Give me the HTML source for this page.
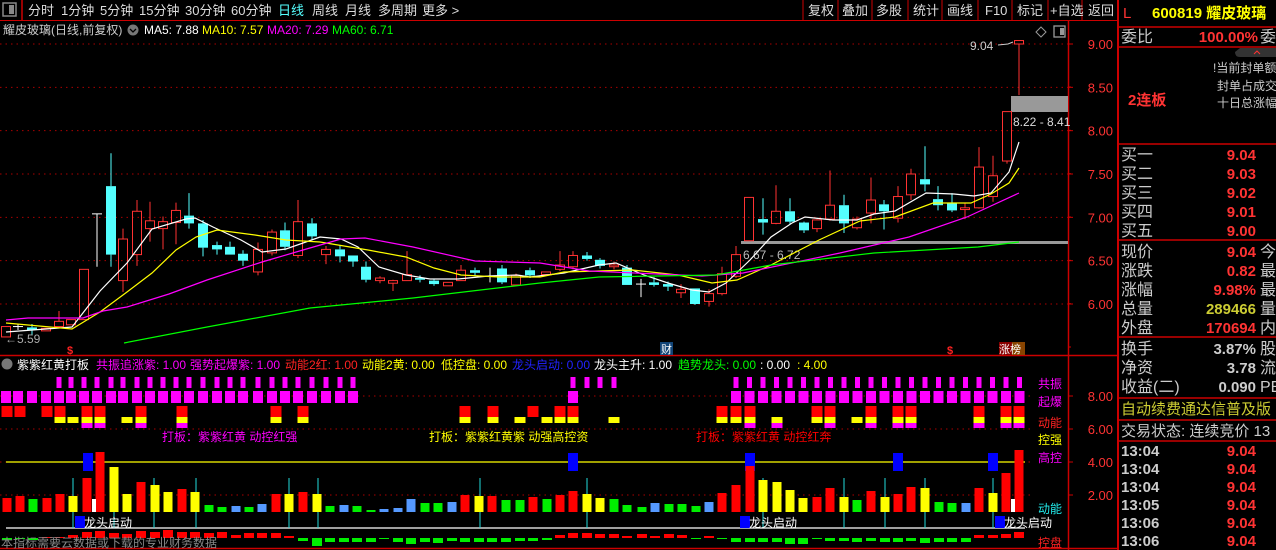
<!DOCTYPE html>
<html><head><meta charset="utf-8">
<style>
html,body{margin:0;padding:0;background:#000;width:1276px;height:550px;overflow:hidden}
svg{display:block}
text{font-family:"Liberation Sans","Noto Sans CJK SC",sans-serif}
</style></head>
<body>
<svg id="s" width="1276" height="550" xmlns="http://www.w3.org/2000/svg">
<rect width="1276" height="550" fill="#000"/>
<rect x="3" y="3" width="13" height="13" fill="none" stroke="#888" stroke-width="1.5"/>
<rect x="9" y="5" width="5" height="9" fill="#888"/>
<line x1="22" y1="0" x2="22" y2="20" stroke="#c00" stroke-width="1.5"/>
<line x1="0" y1="20.5" x2="1117" y2="20.5" stroke="#c00"/>
<g font-size="13" fill="#ddd">
<text x="28" y="15">分时</text><text x="61" y="15">1分钟</text><text x="100" y="15">5分钟</text><text x="139" y="15">15分钟</text><text x="185" y="15">30分钟</text><text x="231" y="15">60分钟</text><text x="278" y="15" fill="#5ff">日线</text><text x="312" y="15">周线</text><text x="345" y="15">月线</text><text x="378" y="15">多周期</text><text x="422" y="15">更多 &gt;</text>
</g>
<g stroke="#c00" stroke-width="1"><line x1="803" y1="0" x2="803" y2="20"/><line x1="838" y1="0" x2="838" y2="20"/><line x1="872" y1="0" x2="872" y2="20"/><line x1="908" y1="0" x2="908" y2="20"/><line x1="942" y1="0" x2="942" y2="20"/><line x1="978" y1="0" x2="978" y2="20"/><line x1="1012" y1="0" x2="1012" y2="20"/><line x1="1048" y1="0" x2="1048" y2="20"/><line x1="1082" y1="0" x2="1082" y2="20"/></g>
<g font-size="13" fill="#ddd">
<text x="808" y="15">复权</text><text x="842" y="15">叠加</text><text x="876" y="15">多股</text><text x="913" y="15">统计</text><text x="947" y="15">画线</text><text x="985" y="15">F10</text><text x="1017" y="15">标记</text><text x="1050" y="15">+自选</text><text x="1088" y="15">返回</text>
</g>
<g font-size="12">
<text x="3" y="34" fill="#ccc">耀皮玻璃(日线,前复权)</text>
<circle cx="133" cy="30" r="5.5" fill="#777"/><path d="M130 29 L133 32 L136 29" stroke="#000" fill="none" stroke-width="1.3"/>
<text x="144" y="34" fill="#fff">MA5: 7.88</text><text x="202" y="34" fill="#ff0">MA10: 7.57</text><text x="267" y="34" fill="#f0f">MA20: 7.29</text><text x="332" y="34" fill="#0f0">MA60: 6.71</text>
</g>
<path d="M1041 27 L1046 32 L1041 37 L1036 32 Z" fill="none" stroke="#999"/>
<rect x="1054" y="26" width="11" height="11" fill="none" stroke="#999" stroke-width="1.3"/><rect x="1060" y="28" width="4" height="7" fill="#999"/>
<line x1="1068.5" y1="21" x2="1068.5" y2="550" stroke="#c00" stroke-width="1.5"/>
<line x1="1118" y1="0" x2="1118" y2="550" stroke="#c00" stroke-width="2"/>
<line x1="0" y1="355.5" x2="1117" y2="355.5" stroke="#c00" stroke-width="1.5"/>
<line x1="0" y1="548.5" x2="1117" y2="548.5" stroke="#c00" stroke-width="1.5"/>
<g id="chart"></g>
<g id="ind"></g>
<g font-size="15">
<text x="1123" y="18" fill="#f33">L</text>
<text x="1152" y="18" fill="#ff0" font-weight="bold">600819 耀皮玻璃</text>
<line x1="1119" y1="27" x2="1276" y2="27" stroke="#c00" stroke-width="1.5"/>
<text x="1121" y="42" fill="#ccc" font-size="16">委比</text><text x="1258" y="42" fill="#f33" text-anchor="end" font-weight="bold">100.00%</text><text x="1260" y="42" fill="#ccc" font-size="16">委</text>
<line x1="1119" y1="47" x2="1276" y2="47" stroke="#c00" stroke-width="1.5"/>
<path d="M1240 48 H1276 V57 H1240 Q1235 57 1235 52 Z" fill="#333"/><path d="M1254 54 L1257 51 L1260 54" stroke="#f33" fill="none"/>
<text x="1128" y="105" fill="#f33" font-size="15" font-weight="bold">2连板</text>
<g font-size="12" fill="#ccc"><text x="1213" y="72">ǃ当前封单额</text><text x="1217" y="90">封单占成交</text><text x="1217" y="107">十日总涨幅</text></g>
<line x1="1119" y1="144" x2="1276" y2="144" stroke="#c00" stroke-width="1.5"/>
<g fill="#ccc" font-size="16"><text x="1121" y="160">买一</text><text x="1121" y="179">买二</text><text x="1121" y="198">买三</text><text x="1121" y="217">买四</text><text x="1121" y="236">买五</text></g>
<g fill="#f33" font-weight="bold" text-anchor="end"><text x="1256" y="160">9.04</text><text x="1256" y="179">9.03</text><text x="1256" y="198">9.02</text><text x="1256" y="217">9.01</text><text x="1256" y="236">9.00</text></g>
<line x1="1119" y1="240" x2="1276" y2="240" stroke="#c00" stroke-width="1.5"/>
<g fill="#ccc" font-size="16"><text x="1121" y="257">现价</text><text x="1121" y="276">涨跌</text><text x="1121" y="295">涨幅</text><text x="1121" y="314">总量</text><text x="1121" y="333">外盘</text>
<text x="1260" y="257">今</text><text x="1260" y="276">最</text><text x="1260" y="295">最</text><text x="1260" y="314">量</text><text x="1260" y="333">内</text></g>
<g font-weight="bold" text-anchor="end"><text x="1256" y="257" fill="#f33">9.04</text><text x="1256" y="276" fill="#f33">0.82</text><text x="1256" y="295" fill="#f33">9.98%</text><text x="1256" y="314" fill="#cc3">289466</text><text x="1256" y="333" fill="#f33">170694</text></g>
<line x1="1119" y1="337" x2="1276" y2="337" stroke="#c00" stroke-width="1.5"/>
<g fill="#ccc" font-size="16"><text x="1121" y="354">换手</text><text x="1121" y="373">净资</text><text x="1121" y="392">收益(二)</text><text x="1260" y="354">股</text><text x="1260" y="373">流</text><text x="1260" y="392">PE</text></g>
<g font-weight="bold" text-anchor="end" fill="#ccc"><text x="1256" y="354">3.87%</text><text x="1256" y="373">3.78</text><text x="1256" y="392">0.090</text></g>
<line x1="1119" y1="398" x2="1276" y2="398" stroke="#c00" stroke-width="1.5"/>
<text x="1121" y="414" fill="#cc3" font-size="15">自动续费通达信普及版</text>
<line x1="1119" y1="420" x2="1276" y2="420" stroke="#c00" stroke-width="1.5"/>
<text x="1121" y="436" fill="#ccc" font-size="15">交易状态: 连续竞价 13</text>
<line x1="1119" y1="441" x2="1276" y2="441" stroke="#c00" stroke-width="1.5"/>
<g font-weight="bold" font-size="15"><g fill="#ccc"><text x="1121" y="456">13:04</text><text x="1121" y="474">13:04</text><text x="1121" y="492">13:04</text><text x="1121" y="510">13:05</text><text x="1121" y="528">13:06</text><text x="1121" y="546">13:06</text></g>
<g fill="#f33" text-anchor="end"><text x="1256" y="456">9.04</text><text x="1256" y="474">9.04</text><text x="1256" y="492">9.04</text><text x="1256" y="510">9.04</text><text x="1256" y="528">9.04</text><text x="1256" y="546">9.04</text></g></g>
</g>
</svg>
<script>
var NS="http://www.w3.org/2000/svg";
function el(p,t,a,txt){var e=document.createElementNS(NS,t);for(var k in a)e.setAttribute(k,a[k]);if(txt!=null)e.textContent=txt;p.appendChild(e);return e;}
var C=document.getElementById('chart'),I=document.getElementById('ind');
function Y(p){return 44+(9-p)*86.67;}
[9,8.5,8,7.5,7,6.5,6].forEach(function(p){el(C,'line',{x1:0,x2:1068,y1:Y(p),y2:Y(p),stroke:'#a00','stroke-dasharray':'1.5 4'});
el(C,'text',{x:1113,y:Y(p)+5,fill:'#f33','font-size':'13','text-anchor':'end'},p.toFixed(2));
el(C,'line',{x1:1068,x2:1073,y1:Y(p),y2:Y(p),stroke:'#c00'});
el(C,'line',{x1:1068,x2:1071,y1:Y(p)+43,y2:Y(p)+43,stroke:'#c00'});});
var K=[[6,5.62,5.74],[18,5.74,5.74,5.77,5.70],[32,5.73,5.70,5.77,5.64],[46,5.69,5.72],[59,5.74,5.80,5.92,5.72],[71,5.76,5.82],[84,5.82,6.40],[97,7.04,7.04,7.04,6.43],[111,7.36,6.57,7.74,6.43],[123,6.27,6.75,6.87,6.14],[137,6.57,7.07,7.2,6.44],[150,6.87,6.96,7.18,6.72],[163,6.87,6.95,7.01,6.63],[176,6.94,7.08,7.17,6.69],[189,7.02,6.93,7.28,6.87],[203,6.93,6.65,6.97,6.55],[217,6.68,6.63,6.72,6.57],[230,6.66,6.57,6.72,6.57],[243,6.58,6.50,6.62,6.44],[258,6.37,6.63,6.71,6.33],[272,6.59,6.83,6.86,6.56],[285,6.85,6.66,6.94,6.62],[298,6.56,6.95,7.2,6.53],[312,6.93,6.78,6.99,6.74],[326,6.57,6.63,6.67,6.46],[340,6.63,6.55,6.68,6.48],[353,6.56,6.49,6.56,6.43],[366,6.43,6.28,6.49,6.25],[380,6.27,6.30,6.32,6.24],[393,6.24,6.27,6.28,6.15],[407,6.27,6.34,6.61,6.27],[420,6.30,6.28,6.33,6.25],[434,6.27,6.23,6.29,6.21],[448,6.21,6.25],[461,6.27,6.39,6.45,6.27],[475,6.39,6.36,6.42,6.32],[490,6.32,6.32,6.42,6.25],[502,6.41,6.25,6.45,6.23],[516,6.22,6.33,6.35,6.22],[530,6.39,6.33,6.42,6.30],[546,6.34,6.37],[560,6.40,6.45,6.61,6.38],[573,6.43,6.56,6.61,6.40],[587,6.56,6.52,6.60,6.50],[600,6.51,6.44,6.53,6.41],[614,6.43,6.45,6.49,6.40],[627,6.42,6.22,6.45,6.22],[641,6.23,6.23,6.29,6.08],[654,6.25,6.22,6.31,6.20],[668,6.23,6.20,6.26,6.15],[681,6.13,6.17,6.23,6.07],[695,6.18,6.00,6.18,5.99],[709,6.03,6.12,6.17,5.97],[722,6.12,6.35,6.43,6.10],[736,6.32,6.57,6.67,6.30],[749,6.73,7.23],[763,6.98,6.94,7.22,6.80],[776,6.93,7.07,7.37,6.92],[790,7.07,6.95,7.22,6.92],[804,6.94,6.85,6.95,6.82],[817,6.87,6.97,6.98,6.83],[830,6.98,7.14,7.54,6.96],[844,7.14,6.93,7.26,6.82],[857,6.88,6.98,7.01,6.86],[871,7.05,7.20,7.46,6.93],[884,7.15,7.07,7.20,6.86],[898,6.99,7.24,7.36,6.94],[911,7.26,7.50,7.56,7.20],[925,7.44,7.38,7.82,7.30],[938,7.21,7.14,7.36,7.08],[952,7.17,7.08,7.28,7.06],[965,7.09,7.11,7.17,6.98],[979,7.11,7.58,7.81,7.10],[993,7.24,7.48,7.71,7.18],[1007,7.65,8.22,8.22,7.62],[1019,9.00,9.04,9.04,8.41]];
el(C,'rect',{x:741,y:241,width:327,height:3,fill:'#999'});
el(C,'text',{x:743,y:259,fill:'#bbb','font-size':'12'},'6.67 - 6.72');
el(C,'rect',{x:1011,y:96,width:57,height:16,fill:'#999'});
el(C,'text',{x:1013,y:126,fill:'#ddd','font-size':'12'},'8.22 - 8.41');
el(C,'text',{x:970,y:50,fill:'#ccc','font-size':'12'},'9.04');
el(C,'path',{d:'M998 45 L1008 44 L1013 42',stroke:'#ccc',fill:'none'});
K.forEach(function(k){var x=k[0],o=k[1],c=k[2],h=k[3]!=null?k[3]:Math.max(o,c),l=k[4]!=null?k[4]:Math.min(o,c);
var up=c>o,dj=Math.abs(c-o)<0.005,col=dj?'#fff':(up?'#ff3232':'#54ffff');
var t=Y(Math.max(o,c)),b=Y(Math.min(o,c));
el(C,'line',{x1:x,x2:x,y1:Y(h),y2:t,stroke:col});el(C,'line',{x1:x,x2:x,y1:b,y2:Y(l),stroke:col});
if(dj){el(C,'line',{x1:x-5,x2:x+5,y1:t,y2:t,stroke:col});}
else if(up){el(C,'rect',{x:x-4.5,y:t,width:9,height:Math.max(b-t,1),fill:'none',stroke:col});}
else el(C,'rect',{x:x-5,y:t,width:10,height:Math.max(b-t,1.5),fill:col});});
function pl(pts,col){el(C,'polyline',{points:pts,fill:'none',stroke:col,'stroke-width':1.2});}
pl('6,332 72,327 100,291 127,263 152,229 186,219 195,218 213,227 241,240 262,252 286,249 320,237 341,239 358,247 379,267 406,275 430,279 458,279 489,276 517,275 530,277 564,273 599,265 616,263 644,275 668,283 692,290 709,292 726,283 750,260 771,237 792,223 805,217 833,220 857,220 874,214 895,211 926,193 954,194 974,196 991,193 1009,172 1019,142','#fff');
pl('6,323 72,329 100,312 127,292 152,273 176,250 196,237 217,230 255,235 286,240 320,242 368,250 406,257 434,268 461,275 499,277 540,277 564,272 633,270 678,275 712,283 737,280 771,265 819,240 860,221 895,217 933,203 971,203 991,194 1009,183 1019,168','#ff0');
pl('6,320 28,318 83,318 103,311 127,307 169,294 207,280 262,262 303,250 341,239 365,238 413,247 475,261 540,263 589,271 702,276 743,273 840,253 909,237 967,217 1019,193','#f0f');
pl('124,343 207,327 310,308 413,298 540,283 599,277 716,275 771,265 874,253 978,247 1019,242','#0f0');
el(C,'text',{x:5,y:343,fill:'#aaa','font-size':'12'},'←5.59');
el(C,'text',{x:67,y:354,fill:'#f22','font-size':'11','font-weight':'bold'},'$');
el(C,'text',{x:947,y:354,fill:'#f22','font-size':'11','font-weight':'bold'},'$');
el(C,'rect',{x:660,y:342,width:13,height:13,fill:'#147'});el(C,'text',{x:661,y:353,fill:'#fff','font-size':'11'},'财');
el(C,'rect',{x:999,y:342,width:13,height:13,fill:'#800'});el(C,'rect',{x:1012,y:342,width:13,height:13,fill:'#840'});
el(C,'text',{x:999,y:353,fill:'#fff','font-size':'11'},'涨榜');
el(I,'circle',{cx:7,cy:364,r:5.5,fill:'#777'});
var hd=[[17,'#fff','紫紫红黄打板'],[96,'#f0f','共振追涨紫: 1.00'],[190,'#f0f','强势起爆紫: 1.00'],[285,'#f22','动能2红: 1.00'],[362,'#ff0','动能2黄: 0.00'],[441,'#ff0','低控盘: 0.00'],[512,'#22f','龙头启动: 0.00'],[594,'#fff','龙头主升: 1.00'],[678,'#0f0','趋势龙头: 0.00'],[760,'#fff',': 0.00'],[797,'#ff0',': 4.00']];
hd.forEach(function(h){el(I,'text',{x:h[0],y:369,fill:h[1],'font-size':'12'},h[2]);});
[8,6,4,2].forEach(function(v){var y=396+(8-v)*16.5;el(I,'line',{x1:0,x2:1030,y1:y,y2:y,stroke:'#a00','stroke-dasharray':'1.5 4'});
el(I,'text',{x:1113,y:y+5,fill:'#f33','font-size':'13','text-anchor':'end'},v.toFixed(2));el(I,'line',{x1:1068,x2:1073,y1:y,y2:y,stroke:'#c00'});});
var xs=[6,18,32,46,59,71,84,97,111,123,137,150,163,176,189,203,217,230,243,258,272,285,298,312,326,340,353];
xs.forEach(function(x,i){el(I,'rect',{x:x-5,y:391,width:10,height:12,fill:'#f0f'});if(i>=4)el(I,'rect',{x:x-2.5,y:377,width:5,height:11,fill:'#f0f'});});
[573].forEach(function(x){el(I,'rect',{x:x-5,y:391,width:10,height:12,fill:'#f0f'});});
[573,587,600,614].forEach(function(x){el(I,'rect',{x:x-2.5,y:377,width:5,height:11,fill:'#f0f'});});
for(var x=736;x<=1020;x+=13.5){el(I,'rect',{x:x-5,y:391,width:10,height:12,fill:'#f0f'});el(I,'rect',{x:x-2.5,y:377,width:5,height:11,fill:'#f0f'});}
function blk(list,y,h,col){list.forEach(function(x){el(I,'rect',{x:x-5.5,y:y,width:11,height:h,fill:col});});}
blk([7,20,47,60,87,100,141,182,276,303,465,493,533,560,573,722,736,750,817,830,871,898,911,979,1006,1019],406,11,'#f00');
blk([60,73,87,100,127,141,182,276,303,465,493,520,547,560,573,614,722,736,750,777,817,830,857,871,898,911,979,1006,1019],417,6,'#ff0');
blk([87,100,141,182,750,777,830,871,898,911,979,1006,1019],423,5,'#f0f');
el(I,'text',{x:162,y:441,fill:'#f0f','font-size':'12'},'打板：紫紫红黄 动控红强');
el(I,'text',{x:429,y:441,fill:'#ff0','font-size':'12'},'打板：紫紫红黄紫 动强高控资');
el(I,'text',{x:696,y:441,fill:'#f00','font-size':'12'},'打板：紫紫红黄 动控红奔');
el(I,'line',{x1:6,x2:1025,y1:462,y2:462,stroke:'#ff0','stroke-width':1.3});
el(I,'line',{x1:6,x2:1025,y1:528,y2:528,stroke:'#fff','stroke-width':1.3});
[88,573,750,898,993].forEach(function(x){el(I,'rect',{x:x-5,y:453,width:10,height:18,fill:'#00f'});});
[73,114,154,196,289,318,480,587,763,844,885,925,993].forEach(function(x){el(I,'line',{x1:x,x2:x,y1:478,y2:528,stroke:'#2dd'});});
var CO={r:'#f00',y:'#ff0',g:'#0e0',b:'#59f'};
var V=[[7,498,'r'],[20,496,'r'],[33,499,'g'],[47,498,'r'],[60,494,'r'],[73,496,'y'],[87,478,'r'],[100,452,'r'],[114,467,'y'],[127,494,'y'],[141,482,'r'],[155,485,'y'],[168,492,'y'],[182,489,'r'],[195,492,'y'],[209,505,'g'],[222,507,'g'],[236,506,'b'],[249,507,'g'],[262,504,'b'],[276,494,'r'],[289,494,'y'],[303,492,'r'],[317,494,'y'],[330,506,'g'],[344,505,'b'],[357,506,'g'],[371,510,'g'],[384,509,'b'],[398,508,'b'],[411,499,'b'],[425,503,'g'],[438,503,'g'],[452,502,'b'],[465,495,'r'],[479,496,'y'],[492,496,'r'],[506,500,'g'],[520,500,'g'],[533,497,'r'],[547,499,'g'],[560,495,'r'],[573,491,'r'],[587,494,'y'],[600,498,'y'],[614,499,'g'],[627,505,'g'],[642,507,'g'],[655,503,'b'],[669,504,'g'],[682,504,'g'],[696,506,'g'],[709,502,'b'],[722,493,'r'],[736,485,'r'],[750,466,'r'],[763,480,'y'],[777,482,'y'],[790,490,'y'],[803,498,'y'],[817,497,'r'],[830,488,'r'],[844,497,'y'],[857,500,'g'],[871,491,'r'],[885,497,'y'],[898,494,'r'],[911,487,'r'],[925,488,'y'],[939,502,'g'],[952,503,'g'],[966,503,'b'],[979,488,'r'],[993,493,'y'],[1006,473,'r'],[1019,450,'r']];
V.forEach(function(v){el(I,'rect',{x:v[0]-4.5,y:v[1],width:9,height:512-v[1],fill:CO[v[2]]});});
el(I,'rect',{x:92,y:499,width:4,height:13,fill:'#fff'});el(I,'rect',{x:1011,y:499,width:4,height:13,fill:'#fff'});
var B=[[7,-2],[20,-1],[33,-2],[47,1],[60,1],[73,3],[87,6],[100,7],[114,5],[127,4],[141,7],[155,6],[168,8],[182,6],[195,6],[209,5],[222,6],[236,3],[249,5],[262,5],[276,5],[289,2],[303,-3],[317,-8],[330,-4],[344,-4],[357,-4],[371,-4],[384,-1],[398,-4],[411,-6],[425,-4],[438,-5],[452,-3],[465,-4],[479,-4],[492,-4],[506,-4],[520,-3],[533,-3],[547,-2],[560,3],[573,5],[587,5],[600,4],[614,4],[627,2],[642,4],[655,2],[669,4],[682,3],[696,-1],[709,2],[722,-1],[736,-4],[750,-4],[763,-4],[777,-4],[790,-6],[803,-6],[817,-1],[830,-3],[844,-3],[857,-4],[871,-3],[885,-4],[898,-4],[911,-3],[925,-5],[939,-4],[952,-4],[966,-4],[979,3],[993,3],[1006,4],[1019,6]];
B.forEach(function(b){var h=Math.abs(b[1]);if(b[1]>0)el(I,'rect',{x:b[0]-5,y:538-h,width:10,height:h,fill:'#f00'});else el(I,'rect',{x:b[0]-5,y:538,width:10,height:h,fill:'#0e0'});});
el(I,'text',{x:1,y:547,fill:'#888','font-size':'12'},'本指标需要云数据或下载的专业财务数据');
[[75,'龙头启动'],[740,'龙头启动'],[995,'龙头启动']].forEach(function(d){el(I,'rect',{x:d[0],y:516,width:10,height:12,fill:'#00f'});el(I,'text',{x:d[0]+9,y:527,fill:'#fff','font-size':'12'},d[1]);});
var RL=[[383,'#f0f','共振'],[401,'#f0f','起爆'],[422,'#f22','动能'],[439,'#ff0','控强'],[457,'#f0f','高控'],[508,'#2ee','动能'],[542,'#f22','控盘']];
RL.forEach(function(r){el(I,'text',{x:1038,y:r[0]+5,fill:r[1],'font-size':'12'},r[2]);});
</script>
</body></html>
